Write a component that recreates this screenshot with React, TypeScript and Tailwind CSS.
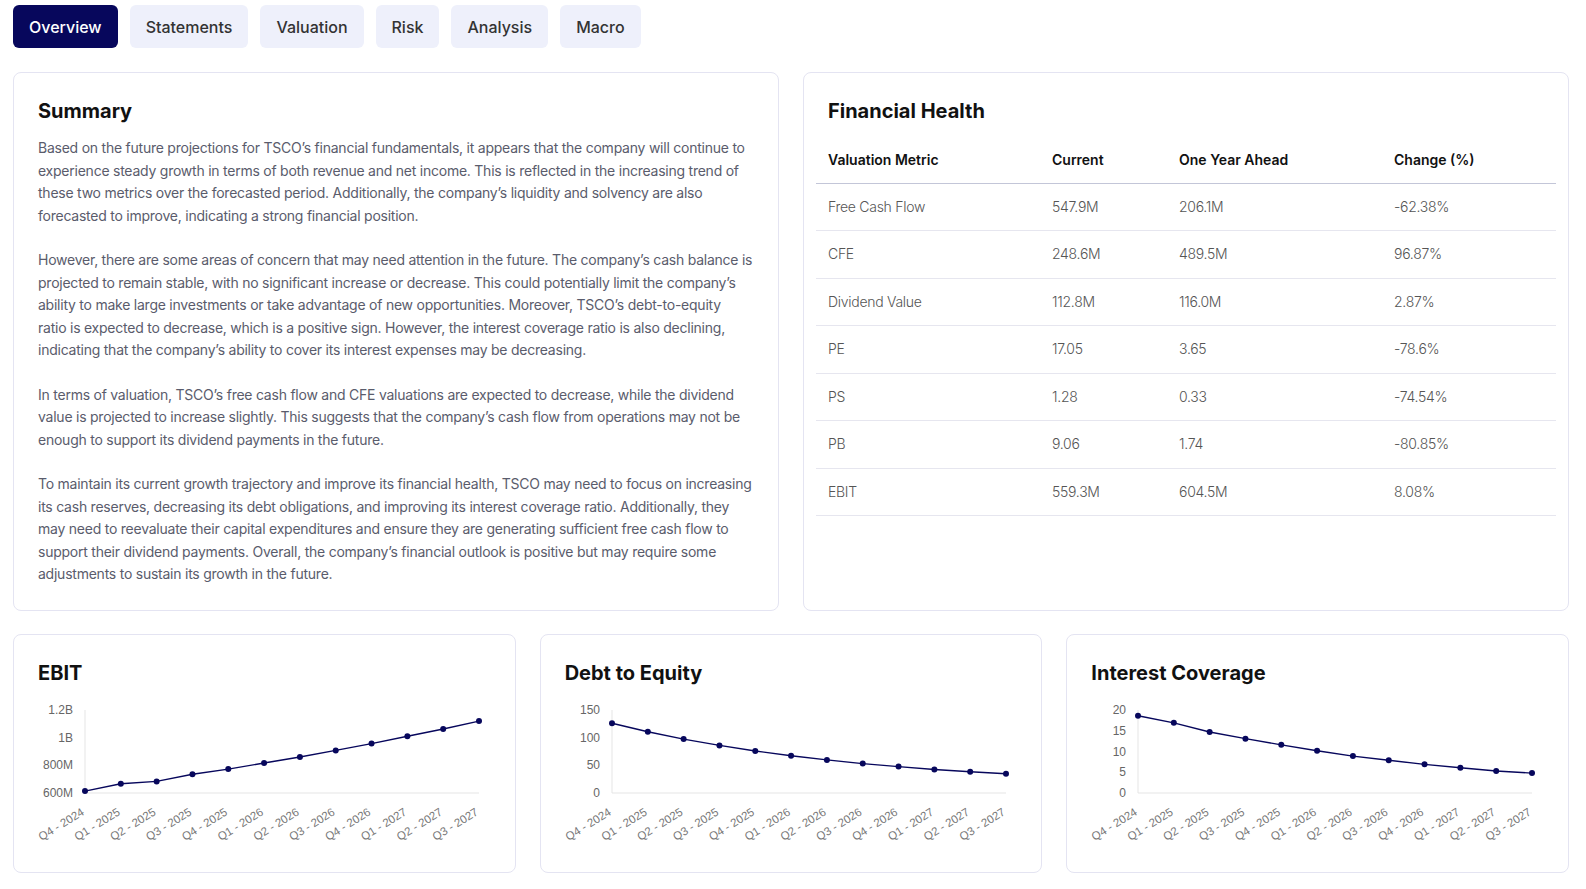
import React from 'react';

const NAVY = '#07075c';

const tabs = ['Overview', 'Statements', 'Valuation', 'Risk', 'Analysis', 'Macro'];

const summary = [
  'Based on the future projections for TSCO’s financial fundamentals, it appears that the company will continue to experience steady growth in terms of both revenue and net income. This is reflected in the increasing trend of these two metrics over the forecasted period. Additionally, the company’s liquidity and solvency are also forecasted to improve, indicating a strong financial position.',
  'However, there are some areas of concern that may need attention in the future. The company’s cash balance is projected to remain stable, with no significant increase or decrease. This could potentially limit the company’s ability to make large investments or take advantage of new opportunities. Moreover, TSCO’s debt-to-equity ratio is expected to decrease, which is a positive sign. However, the interest coverage ratio is also declining, indicating that the company’s ability to cover its interest expenses may be decreasing.',
  'In terms of valuation, TSCO’s free cash flow and CFE valuations are expected to decrease, while the dividend value is projected to increase slightly. This suggests that the company’s cash flow from operations may not be enough to support its dividend payments in the future.',
  'To maintain its current growth trajectory and improve its financial health, TSCO may need to focus on increasing its cash reserves, decreasing its debt obligations, and improving its interest coverage ratio. Additionally, they may need to reevaluate their capital expenditures and ensure they are generating sufficient free cash flow to support their dividend payments. Overall, the company’s financial outlook is positive but may require some adjustments to sustain its growth in the future.',
];

const rows = [
  ['Free Cash Flow', '547.9M', '206.1M', '-62.38%'],
  ['CFE', '248.6M', '489.5M', '96.87%'],
  ['Dividend Value', '112.8M', '116.0M', '2.87%'],
  ['PE', '17.05', '3.65', '-78.6%'],
  ['PS', '1.28', '0.33', '-74.54%'],
  ['PB', '9.06', '1.74', '-80.85%'],
  ['EBIT', '559.3M', '604.5M', '8.08%'],
];

const quarters = [
  'Q4 - 2024', 'Q1 - 2025', 'Q2 - 2025', 'Q3 - 2025', 'Q4 - 2025', 'Q1 - 2026',
  'Q2 - 2026', 'Q3 - 2026', 'Q4 - 2026', 'Q1 - 2027', 'Q2 - 2027', 'Q3 - 2027',
];

interface ChartProps {
  title: string;
  values: number[];
  min: number;
  max: number;
  ticks: string[];
}

const charts: ChartProps[] = [
  {
    title: 'EBIT',
    values: [614, 667, 684, 735, 773, 817, 860, 908, 957, 1010, 1063, 1120],
    min: 600,
    max: 1200,
    ticks: ['1.2B', '1B', '800M', '600M'],
  },
  {
    title: 'Debt to Equity',
    values: [126, 110.6, 97.4, 86, 75.9, 67.5, 59.8, 53.2, 47.8, 42.4, 38.3, 34.7],
    min: 0,
    max: 150,
    ticks: ['150', '100', '50', '0'],
  },
  {
    title: 'Interest Coverage',
    values: [18.6, 16.9, 14.7, 13.1, 11.6, 10.2, 8.9, 7.9, 6.9, 6.1, 5.3, 4.8],
    min: 0,
    max: 20,
    ticks: ['20', '15', '10', '5', '0'],
  },
];

// plot area inside the svg
const LEFT = 47;
const RIGHT = 441;
const TOP = 23;
const BOTTOM = 106;

function LineChart({ values, min, max, ticks }: ChartProps) {
  const step = (RIGHT - LEFT) / (values.length - 1);
  const pts = values.map((v, i) => ({
    x: LEFT + i * step,
    y: BOTTOM - ((v - min) / (max - min)) * (BOTTOM - TOP),
  }));
  const line = pts.map((p, i) => `${i === 0 ? 'M' : 'L'}${p.x.toFixed(1)},${p.y.toFixed(1)}`).join(' ');

  return (
    <svg width="100%" height="185" className="block overflow-visible" style={{ fontFamily: '"Liberation Sans", Arial, sans-serif' }}>
      <line x1={LEFT} y1={TOP} x2={LEFT} y2={BOTTOM} stroke="#e5e5e5" strokeWidth="1" />
      <line x1={LEFT} y1={BOTTOM} x2={RIGHT} y2={BOTTOM} stroke="#e5e5e5" strokeWidth="1" />
      {ticks.map((t, i) => {
        const y = TOP + (i * (BOTTOM - TOP)) / (ticks.length - 1);
        return (
          <text key={t} x={LEFT - 12} y={y + 4} textAnchor="end" fontSize="12" fill="#666">
            {t}
          </text>
        );
      })}
      {quarters.map((q, i) => {
        const x = LEFT + i * step;
        const y = BOTTOM + 21;
        return (
          <text key={q} x={x} y={y} textAnchor="end" fontSize="11.5" fill="#777" transform={`rotate(-32 ${x} ${y})`}>
            {q}
          </text>
        );
      })}
      <path d={line} fill="none" stroke={NAVY} strokeWidth="1.4" />
      {pts.map((p, i) => (
        <circle key={i} cx={p.x} cy={p.y} r="3" fill={NAVY} />
      ))}
    </svg>
  );
}

export default function App() {
  return (
    <div className="min-h-screen bg-white px-[13px] pt-[5px] pb-4" style={{ fontFamily: 'Inter, "Noto Sans", sans-serif' }}>
      <div className="w-[1556px]">
        {/* Tabs */}
        <div className="flex gap-3">
          {tabs.map((t, i) => (
            <button
              key={t}
              className={`h-[43px] px-4 rounded-md text-base font-medium ${i === 0 ? 'bg-[#07075c] text-white' : 'bg-[#eef0fb] text-[#333]'}`}
            >
              {t}
            </button>
          ))}
        </div>

        {/* Summary + Financial Health */}
        <div className="mt-6 grid grid-cols-2 gap-6">
          <div className="rounded-lg border border-[#e4e4f2] px-6 pt-6 pb-6">
            <h2 className="text-xl leading-7 font-bold text-[#111]">Summary</h2>
            <div className="mt-3 w-[714.3px] text-sm leading-[22.5px] text-[#5a5c6c] tracking-[-0.017em]">
              {summary.map((p, i) => (
                <p key={i} className={i > 0 ? 'mt-[22px]' : ''}>
                  {p}
                </p>
              ))}
            </div>
          </div>

          <div className="rounded-lg border border-[#e4e4f2] px-3 pt-6">
            <h2 className="px-3 text-xl leading-7 font-bold text-[#111]">Financial Health</h2>
            <table className="mt-3 w-full border-collapse text-sm">
              <thead>
                <tr className="h-[46px] border-b border-[#c3c6d8] text-left text-[#111]">
                  <th className="w-[224px] px-3 font-semibold">Valuation Metric</th>
                  <th className="w-[127px] px-3 font-semibold">Current</th>
                  <th className="w-[215px] px-3 font-semibold">One Year Ahead</th>
                  <th className="px-3 font-semibold">Change (%)</th>
                </tr>
              </thead>
              <tbody>
                {rows.map((r) => (
                  <tr key={r[0]} className="h-[47.5px] border-b border-[#e6e6ef] text-[#555] font-light tracking-[-0.02em]">
                    {r.map((c, j) => (
                      <td key={j} className="px-3">
                        {c}
                      </td>
                    ))}
                  </tr>
                ))}
              </tbody>
            </table>
          </div>
        </div>

        {/* Charts */}
        <div className="mt-[23px] grid grid-cols-3 gap-6">
          {charts.map((c) => (
            <div key={c.title} className="rounded-lg border border-[#e4e4f2] pl-6 pt-6">
              <h2 className="text-xl leading-7 font-bold text-[#111]">{c.title}</h2>
              <LineChart {...c} />
            </div>
          ))}
        </div>
      </div>
    </div>
  );
}
